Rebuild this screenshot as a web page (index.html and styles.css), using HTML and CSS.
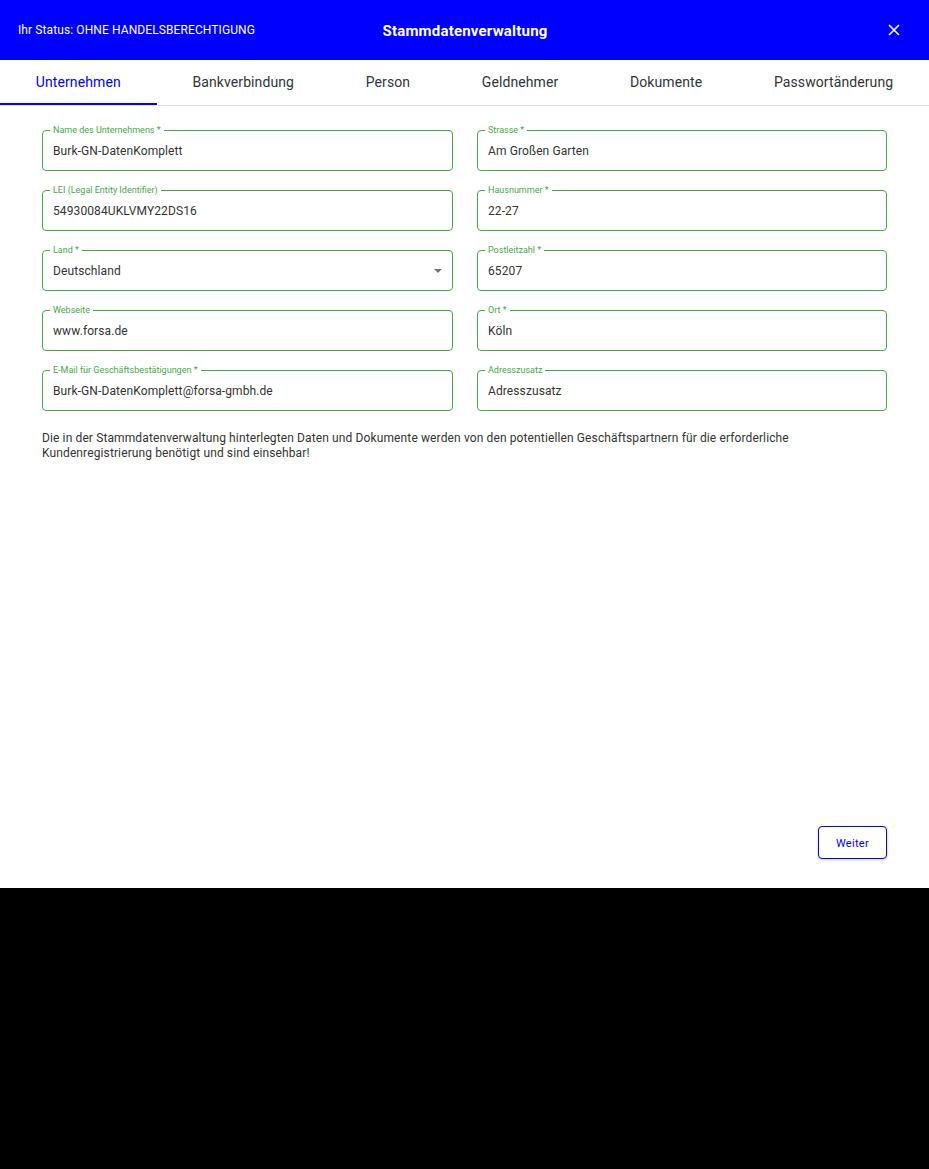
FILE: index.html
```html
<!DOCTYPE html>
<html lang="de">
<head>
<meta charset="utf-8">
<link rel="stylesheet" href="styles.css">
</head>
<body>
<div class="dialog">
  <header class="topbar">
    <div class="status">Ihr Status: OHNE HANDELSBERECHTIGUNG</div>
    <div class="title">Stammdatenverwaltung</div>
    <button class="close" aria-label="Schließen">
      <svg width="12" height="12" viewBox="0 0 12 12"><path d="M1 1L11 11M11 1L1 11" stroke="#fff" stroke-width="1.6" fill="none"/></svg>
    </button>
  </header>
  <nav class="tabs">
    <div class="tab active">Unternehmen</div>
    <div class="tab">Bankverbindung</div>
    <div class="tab">Person</div>
    <div class="tab">Geldnehmer</div>
    <div class="tab">Dokumente</div>
    <div class="tab">Passwortänderung</div>
  </nav>
  <main class="content">
    <div class="grid">
      <div class="field"><span class="label">Name des Unternehmens *</span><span class="value">Burk-GN-DatenKomplett</span></div>
      <div class="field"><span class="label">Strasse *</span><span class="value">Am Großen Garten</span></div>
      <div class="field"><span class="label">LEI (Legal Entity Identifier)</span><span class="value">54930084UKLVMY22DS16</span></div>
      <div class="field"><span class="label">Hausnummer *</span><span class="value">22-27</span></div>
      <div class="field select"><span class="label">Land *</span><span class="value">Deutschland</span><span class="arrow"></span></div>
      <div class="field"><span class="label">Postleitzahl *</span><span class="value">65207</span></div>
      <div class="field"><span class="label">Webseite</span><span class="value">www.forsa.de</span></div>
      <div class="field"><span class="label">Ort *</span><span class="value">Köln</span></div>
      <div class="field"><span class="label">E-Mail für Geschäftsbestätigungen *</span><span class="value">Burk-GN-DatenKomplett@forsa-gmbh.de</span></div>
      <div class="field"><span class="label">Adresszusatz</span><span class="value">Adresszusatz</span></div>
    </div>
    <p class="note">Die in der Stammdatenverwaltung hinterlegten Daten und Dokumente werden von den potentiellen Geschäftspartnern für die erforderliche Kundenregistrierung benötigt und sind einsehbar!</p>
    <div class="actions">
      <button class="btn">Weiter</button>
    </div>
  </main>
</div>
</body>
</html>
```

FILE: styles.css
```css
html, body {
  margin: 0;
  padding: 0;
  background: #000;
  font-family: Roboto, "Liberation Sans", Arial, sans-serif;
}
.dialog {
  width: 929px;
  height: 888px;
  background: #fff;
  display: flex;
  flex-direction: column;
}
.topbar {
  height: 60px;
  background: #0000ff;
  color: #fff;
  display: flex;
  align-items: center;
  position: relative;
  padding: 0 18px;
  box-sizing: border-box;
}
.status {
  font-size: 12px;
  letter-spacing: 0.1px;
  flex: 1;
}
.title {
  position: absolute;
  left: 0;
  right: 0;
  text-align: center;
  font-size: 15px;
  font-weight: 700;
  letter-spacing: 0.2px;
  pointer-events: none;
  padding-left: 1px;
  padding-top: 2px;
}
.close {
  background: none;
  border: 0;
  padding: 0;
  width: 12px;
  height: 12px;
  margin-right: 11px;
  display: flex;
  cursor: pointer;
}
.tabs {
  display: flex;
  height: 45px;
  border-bottom: 1px solid #e0e0e0;
  box-sizing: content-box;
}
.tab {
  flex: 1 1 auto;
  display: flex;
  align-items: center;
  justify-content: center;
  font-size: 14px;
  color: #333;
  letter-spacing: 0.1px;
  padding-bottom: 1px;
}
.tab.active {
  color: #0000ff;
  box-shadow: inset 0 -2px 0 #0000ff;
}
.content {
  flex: 1;
  display: flex;
  flex-direction: column;
  padding: 24px 43px 29px 42px;
}
.grid {
  display: grid;
  grid-template-columns: 411px 410px;
  column-gap: 24px;
  row-gap: 19px;
}
.field {
  position: relative;
  height: 41px;
  border: 1px solid #43a847;
  border-radius: 4px;
  box-sizing: border-box;
  display: flex;
  align-items: center;
  padding: 0 10px;
}
.label {
  position: absolute;
  top: -7px;
  left: 7px;
  padding: 0 3px;
  background: #fff;
  font-size: 9px;
  line-height: 12px;
  color: #43a847;
}
.value {
  font-size: 12px;
  letter-spacing: 0.1px;
  color: #333;
  padding-top: 1px;
}
.arrow {
  position: absolute;
  right: 10px;
  top: 18px;
  width: 0;
  height: 0;
  border-left: 4px solid transparent;
  border-right: 4px solid transparent;
  border-top: 4px solid #757575;
}
.note {
  margin: 20px 0 0;
  font-size: 12px;
  line-height: 15px;
  letter-spacing: 0.12px;
  color: #333;
}
.actions {
  margin-top: auto;
  display: flex;
  justify-content: flex-end;
}
.btn {
  width: 69px;
  height: 33px;
  margin-right: -1px;
  border: 1px solid #0000ff;
  border-radius: 4px;
  background: #fff;
  color: #0000ff;
  font-family: Roboto, "Liberation Sans", Arial, sans-serif;
  font-size: 11px;
  letter-spacing: 0.3px;
  padding-top: 2px;
  box-shadow: 0 1px 3px rgba(0,0,0,0.2);
  cursor: pointer;
}
```
